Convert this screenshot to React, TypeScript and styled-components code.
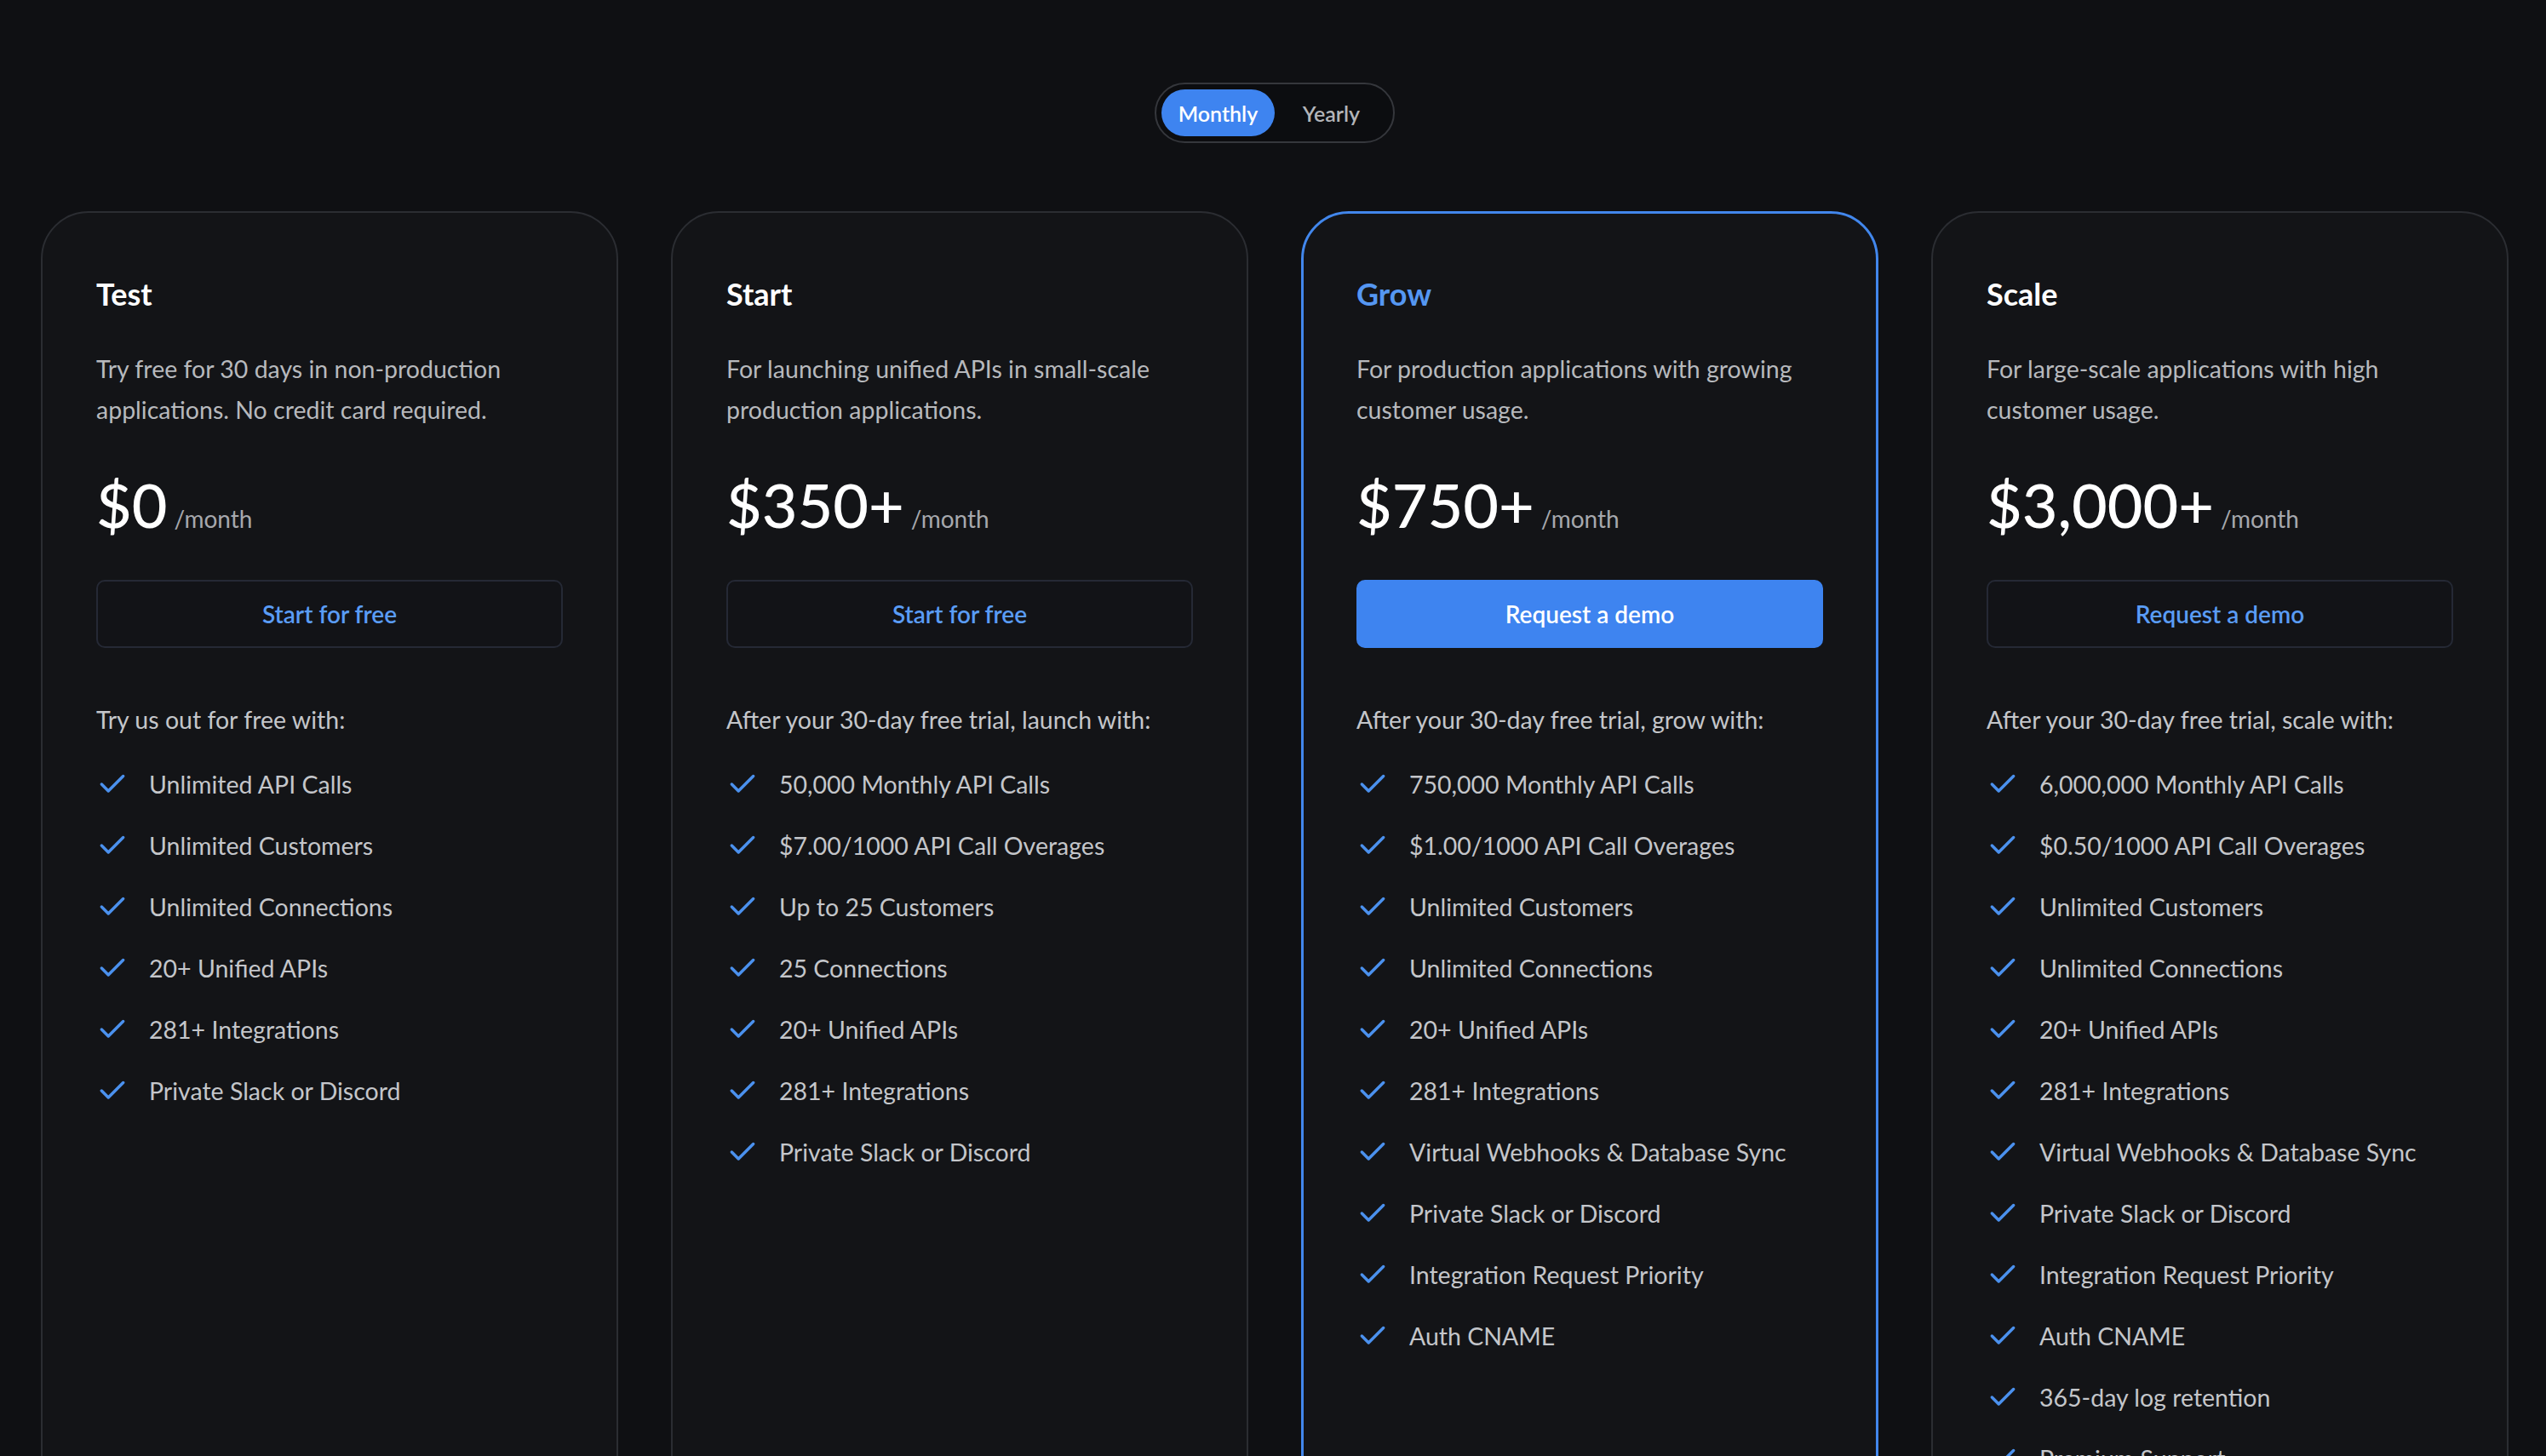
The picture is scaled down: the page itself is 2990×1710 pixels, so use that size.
import { createGlobalStyle } from 'styled-components';
import styled from 'styled-components';
import { Check } from 'lucide-react';

const GlobalStyle = createGlobalStyle`
  html, body {
    margin: 0;
    padding: 0;
    background: #0f1013;
    overflow: hidden;
  }
  body {
    font-family: Lato, 'Liberation Sans', sans-serif;
    -webkit-font-smoothing: antialiased;
  }
`;

interface Plan {
  name: string;
  description: string;
  price: string;
  cta: string;
  intro: string;
  features: string[];
  featured?: boolean;
}

const plans: Plan[] = [
  {
    name: 'Test',
    description: 'Try free for 30 days in non-production applications. No credit card required.',
    price: '$0',
    cta: 'Start for free',
    intro: 'Try us out for free with:',
    features: [
      'Unlimited API Calls',
      'Unlimited Customers',
      'Unlimited Connections',
      '20+ Unified APIs',
      '281+ Integrations',
      'Private Slack or Discord',
    ],
  },
  {
    name: 'Start',
    description: 'For launching unified APIs in small-scale production applications.',
    price: '$350+',
    cta: 'Start for free',
    intro: 'After your 30-day free trial, launch with:',
    features: [
      '50,000 Monthly API Calls',
      '$7.00/1000 API Call Overages',
      'Up to 25 Customers',
      '25 Connections',
      '20+ Unified APIs',
      '281+ Integrations',
      'Private Slack or Discord',
    ],
  },
  {
    name: 'Grow',
    description: 'For production applications with growing customer usage.',
    price: '$750+',
    cta: 'Request a demo',
    intro: 'After your 30-day free trial, grow with:',
    featured: true,
    features: [
      '750,000 Monthly API Calls',
      '$1.00/1000 API Call Overages',
      'Unlimited Customers',
      'Unlimited Connections',
      '20+ Unified APIs',
      '281+ Integrations',
      'Virtual Webhooks & Database Sync',
      'Private Slack or Discord',
      'Integration Request Priority',
      'Auth CNAME',
    ],
  },
  {
    name: 'Scale',
    description: 'For large-scale applications with high customer usage.',
    price: '$3,000+',
    cta: 'Request a demo',
    intro: 'After your 30-day free trial, scale with:',
    features: [
      '6,000,000 Monthly API Calls',
      '$0.50/1000 API Call Overages',
      'Unlimited Customers',
      'Unlimited Connections',
      '20+ Unified APIs',
      '281+ Integrations',
      'Virtual Webhooks & Database Sync',
      'Private Slack or Discord',
      'Integration Request Priority',
      'Auth CNAME',
      '365-day log retention',
      'Premium Support',
    ],
  },
];

function App() {
  return (
    <>
      <GlobalStyle />
      <StyledPage>
        <StyledToggle>
          <StyledToggleOption active>Monthly</StyledToggleOption>
          <StyledToggleOption>Yearly</StyledToggleOption>
        </StyledToggle>

        <StyledGrid>
          {plans.map((plan) => (
            <StyledCard key={plan.name} featured={plan.featured}>
              <StyledPlanName featured={plan.featured}>{plan.name}</StyledPlanName>
              <StyledDescription>{plan.description}</StyledDescription>
              <StyledPriceRow>
                <StyledPrice>{plan.price}</StyledPrice>
                <StyledPeriod>/month</StyledPeriod>
              </StyledPriceRow>
              <StyledCtaBtn featured={plan.featured}>{plan.cta}</StyledCtaBtn>
              <StyledIntro>{plan.intro}</StyledIntro>
              <StyledFeatureList>
                {plan.features.map((feature) => (
                  <StyledFeature key={feature}>
                    <Check size={38} strokeWidth={2.2} color="#4b91ee" />
                    <span>{feature}</span>
                  </StyledFeature>
                ))}
              </StyledFeatureList>
            </StyledCard>
          ))}
        </StyledGrid>
      </StyledPage>
    </>
  );
}

export default App;

const StyledPage = styled.div`
  display: flex;
  flex-direction: column;
  align-items: center;
  padding: 97px 44px 0 48px;
  min-height: 1710px;
  box-sizing: border-box;
`;

const StyledToggle = styled.div`
  display: flex;
  align-items: center;
  padding: 6px;
  border: 2px solid #35373c;
  border-radius: 40px;
  background: #0c0d10;
`;

const StyledToggleOption = styled.div<{ active?: boolean }>`
  width: 133px;
  height: 55px;
  display: flex;
  align-items: center;
  justify-content: center;
  border-radius: 28px;
  font-size: 25px;
  font-weight: 600;
  color: ${({ active }) => (active ? '#ffffff' : '#b3b5b9')};
  background: ${({ active }) => (active ? '#3e84f0' : 'transparent')};
`;

const StyledGrid = styled.div`
  display: grid;
  grid-template-columns: repeat(4, 1fr);
  gap: 62px;
  width: 100%;
  margin-top: 80px;
`;

const StyledCard = styled.div<{ featured?: boolean }>`
  display: flex;
  flex-direction: column;
  min-height: 1600px;
  box-sizing: border-box;
  padding: ${({ featured }) => (featured ? '72px 62px 0' : '73px 63px 0')};
  border: ${({ featured }) => (featured ? '3px solid #4287ec' : '2px solid #2b2d32')};
  border-radius: 56px;
  background: #131417;
`;

const StyledPlanName = styled.div<{ featured?: boolean }>`
  font-size: 36px;
  line-height: 44px;
  font-weight: 700;
  color: ${({ featured }) => (featured ? '#5597f2' : '#ffffff')};
`;

const StyledDescription = styled.p`
  margin: 42px 0 0;
  font-size: 28.5px;
  line-height: 48px;
  color: #b7b9bd;
`;

const StyledPriceRow = styled.div`
  display: flex;
  align-items: baseline;
  gap: 8px;
  margin-top: 51px;
`;

const StyledPrice = styled.span`
  font-size: 72px;
  line-height: 72px;
  font-weight: 500;
  color: #ffffff;
`;

const StyledPeriod = styled.span`
  font-size: 28px;
  color: #a6a8ad;
`;

const StyledCtaBtn = styled.button<{ featured?: boolean }>`
  margin-top: 53px;
  height: 80px;
  width: 100%;
  border-radius: 10px;
  font-family: inherit;
  font-size: 28px;
  font-weight: 600;
  cursor: pointer;
  color: ${({ featured }) => (featured ? '#ffffff' : '#5a9cf5')};
  background: ${({ featured }) => (featured ? '#3e84f0' : '#121317')};
  border: 2px solid ${({ featured }) => (featured ? '#3e84f0' : '#252935')};
`;

const StyledIntro = styled.div`
  margin-top: 60px;
  font-size: 28.5px;
  line-height: 48px;
  color: #c4c6ca;
`;

const StyledFeatureList = styled.ul`
  list-style: none;
  margin: 16px 0 0;
  padding: 0;
`;

const StyledFeature = styled.li`
  display: flex;
  align-items: center;
  gap: 24px;
  height: 72px;
  font-size: 28.5px;
  color: #c4c6ca;

  svg {
    flex-shrink: 0;
  }
`;
